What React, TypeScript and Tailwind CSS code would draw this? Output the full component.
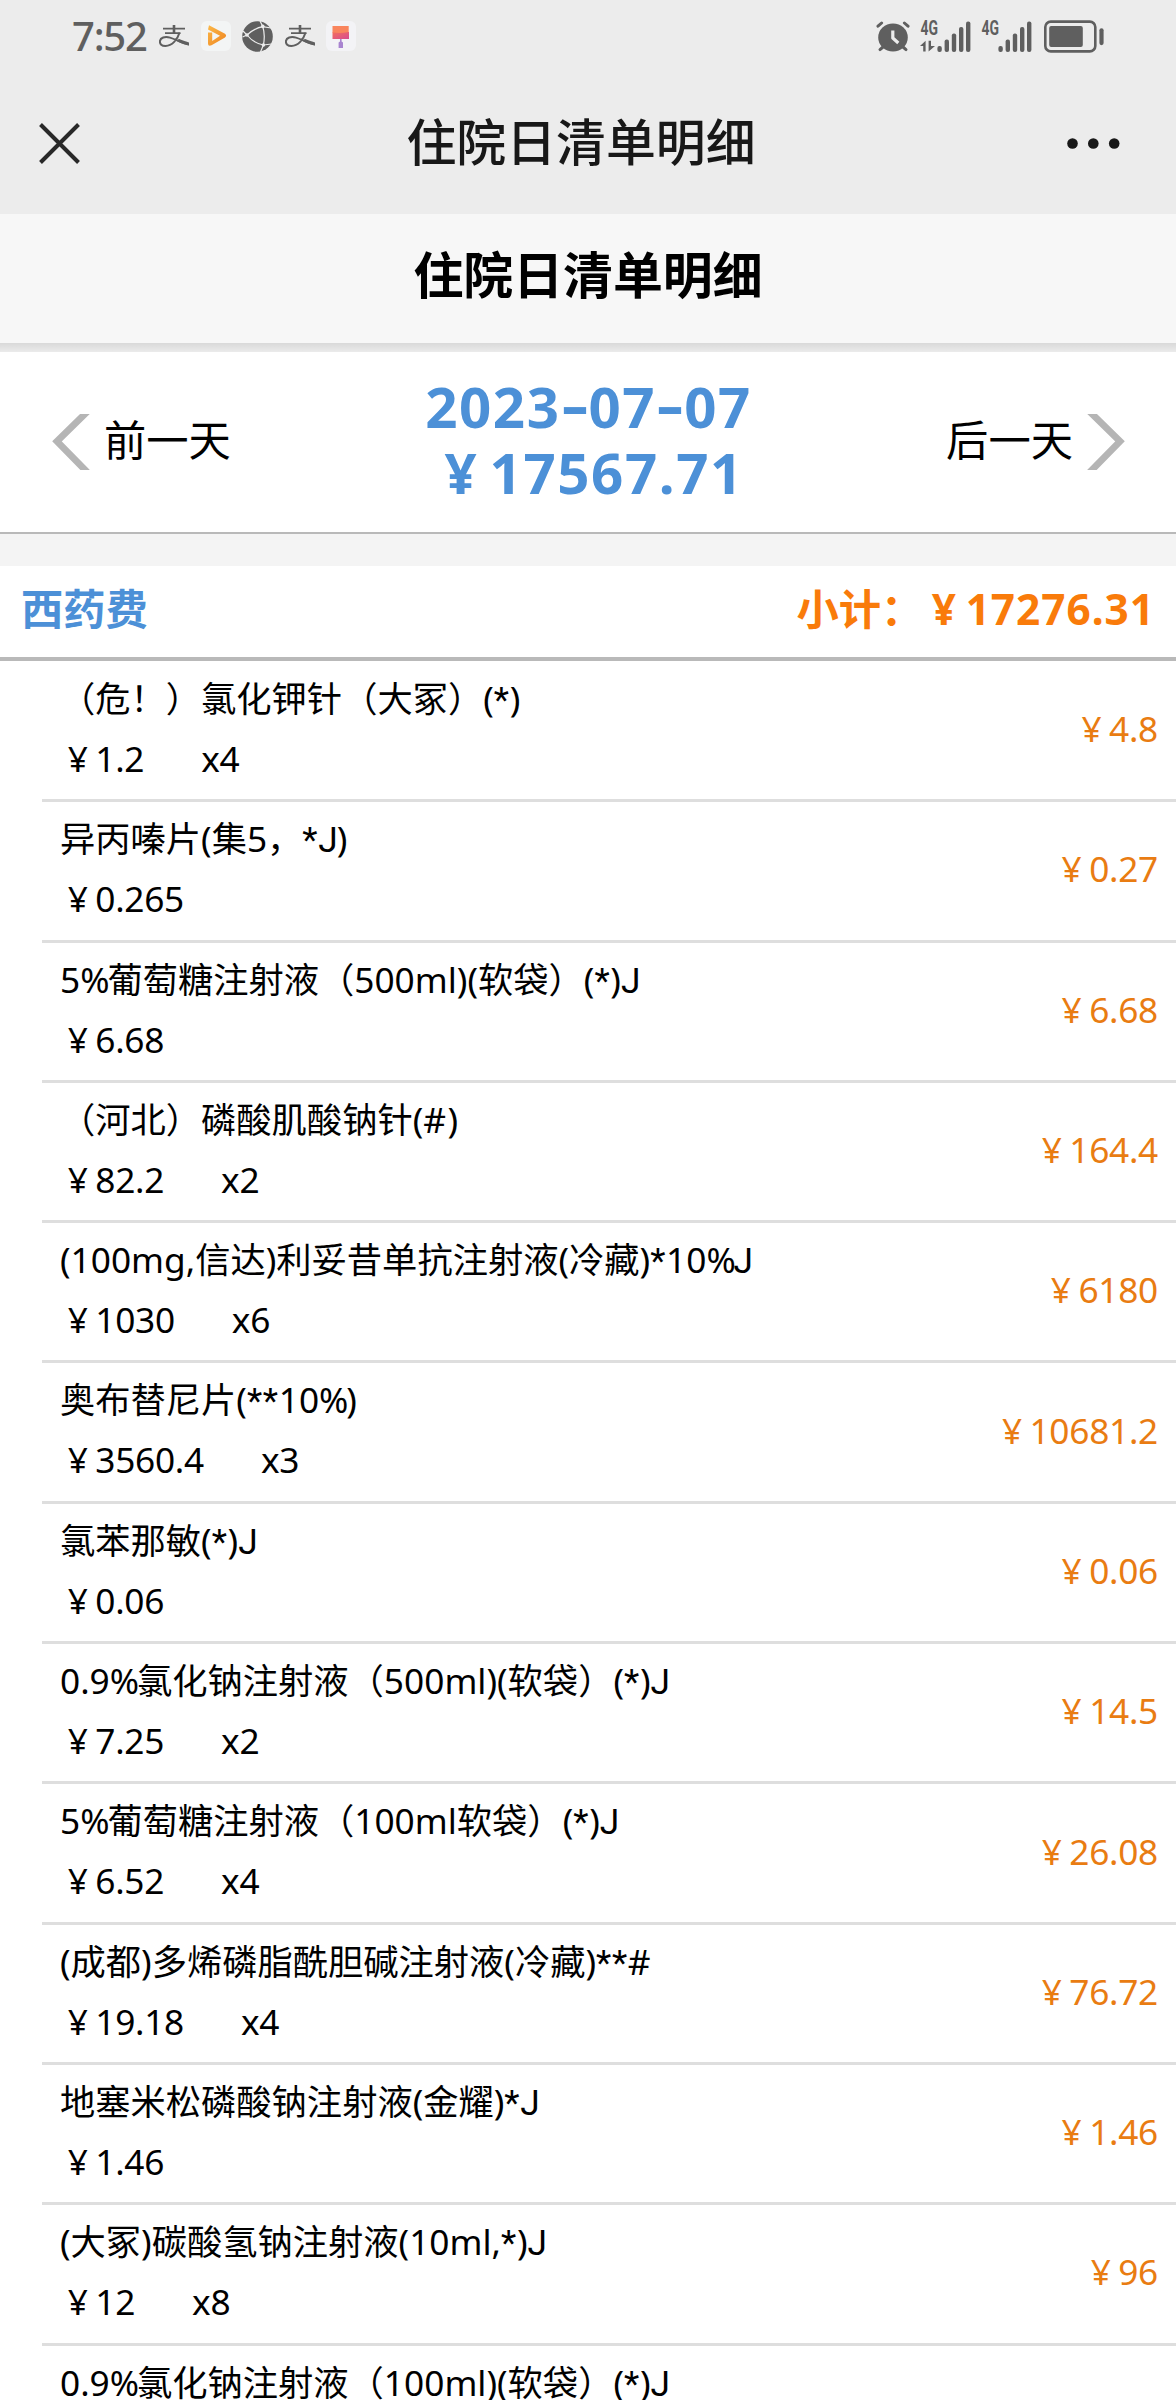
import type { ReactNode } from 'react';

type Item = {
    name: string;
    price: string;
    count?: string;
    total: string;
};

const items: Item[] = [
    { name: '（危！）氯化钾针（大冢）(*)', price: '1.2', count: 'x4', total: '4.8' },
    { name: '异丙嗪片(集5，*J)', price: '0.265', total: '0.27' },
    { name: '5%葡萄糖注射液（500ml)(软袋）(*)J', price: '6.68', total: '6.68' },
    { name: '（河北）磷酸肌酸钠针(#)', price: '82.2', count: 'x2', total: '164.4' },
    { name: '(100mg,信达)利妥昔单抗注射液(冷藏)*10%J', price: '1030', count: 'x6', total: '6180' },
    { name: '奥布替尼片(**10%)', price: '3560.4', count: 'x3', total: '10681.2' },
    { name: '氯苯那敏(*)J', price: '0.06', total: '0.06' },
    { name: '0.9%氯化钠注射液（500ml)(软袋）(*)J', price: '7.25', count: 'x2', total: '14.5' },
    { name: '5%葡萄糖注射液（100ml软袋）(*)J', price: '6.52', count: 'x4', total: '26.08' },
    { name: '(成都)多烯磷脂酰胆碱注射液(冷藏)**#', price: '19.18', count: 'x4', total: '76.72' },
    { name: '地塞米松磷酸钠注射液(金耀)*J', price: '1.46', total: '1.46' },
    { name: '(大冢)碳酸氢钠注射液(10ml,*)J', price: '12', count: 'x8', total: '96' },
    { name: '0.9%氯化钠注射液（100ml)(软袋）(*)J', price: '7.25', count: 'x2', total: '14.5' },
];

/** 个别字符的字体和字距 */
const charStyle: Record<string, string> = {
    J: 'font-[Roboto,sans-serif] leading-none tracking-[-0.03em]',
    '*': 'font-[Roboto,sans-serif] leading-none tracking-[0.02em]',
    '%': 'tracking-[-0.06em]',
    '#': 'tracking-[0.04em]',
};

/** 药品名称 */
function ItemName({ name }: { name: string }) {
    return (
        <p>
            {name.split(/([J*%#])/).map((part, i) =>
                charStyle[part] ? (
                    <span key={i} className={charStyle[part]}>
                        {part}
                    </span>
                ) : (
                    part
                ),
            )}
        </p>
    );
}

/** 金额：符号占一个全角宽度 */
function Money({ value }: { value: string }) {
    return (
        <>
            <span className="inline-block w-[1em] text-center">¥</span>
            {value}
        </>
    );
}

function AlipayIcon() {
    return (
        <svg width="30" height="30" viewBox="0 0 30 30" fill="none" stroke="#5f5f5f">
            <path d="M4 7.6H26M6 12.2H21.5" strokeWidth="1.8" />
            <path d="M15 4V12" strokeWidth="2.6" />
            <path
                d="M20.5 11.8C18.5 18.5 13 25 6.5 25C2.5 25 .8 23 .9 20.4C1.2 16.6 6 15.2 11 16.6C17 18.3 23 22.3 30 23.6"
                strokeWidth="2"
            />
            <path d="M19 19.2C23 21 26.5 22.4 30 22.9" strokeWidth="3" />
        </svg>
    );
}

function PlayIcon() {
    return (
        <svg width="30" height="30" viewBox="0 0 30 30">
            <defs>
                <linearGradient id="play" x1="0" y1="0" x2="1" y2="1">
                    <stop offset="0" stopColor="#fbb848" />
                    <stop offset="1" stopColor="#ee8420" />
                </linearGradient>
            </defs>
            <rect width="30" height="30" rx="6" fill="#f3f5f5" />
            <path
                d="M8 4.2L24 12.8Q26.2 14.6 24 16.4L10.5 24.3Q7 25.6 7 22.5V11.5H11.2V20L19 14.8L7 8.6Z"
                fill="url(#play)"
            />
        </svg>
    );
}

function GlobeIcon() {
    return (
        <svg width="31" height="31" viewBox="0 0 31 31">
            <circle cx="15.5" cy="15.5" r="15.3" fill="#5f5f5f" />
            <g fill="none" stroke="#ececec" strokeWidth="1.2">
                <path d="M0.5 16L5 14C10 9.5 15 6.5 20.8 5.6L29 7" />
                <path d="M18 0L20.8 5.6C22.5 11 22.6 18 21.4 24L18.5 31" />
                <path d="M1 10L5 14C9 19 14 22.6 21.4 24L29.5 23" />
            </g>
            <g fill="#ececec">
                <circle cx="20.8" cy="5.4" r="1.8" />
                <circle cx="5" cy="14" r="1.8" />
                <circle cx="21.4" cy="24" r="1.8" />
            </g>
        </svg>
    );
}

function BrushIcon() {
    return (
        <svg width="30" height="30" viewBox="0 0 30 30">
            <defs>
                <linearGradient id="brush" x1="0" y1="0" x2="1" y2="1">
                    <stop offset="0" stopColor="#f4705c" />
                    <stop offset="1" stopColor="#d64a92" />
                </linearGradient>
            </defs>
            <rect width="30" height="30" rx="6" fill="#f3f3f6" />
            <path d="M6.5 11H23V18H6.5Z" fill="url(#brush)" />
            <path d="M6.5 5H22.7V11Q15 12.5 6.5 11.5Z" fill="#f9855e" />
            <path d="M14 18H15.6V20.5L17 21.5V27H12.6V21.5L14 20.5Z" fill="#a884d0" />
        </svg>
    );
}

function AlarmIcon() {
    return (
        <svg width="34" height="31" viewBox="0 0 34 31" fill="none" stroke="#5f5f5f" strokeLinecap="round">
            <ellipse cx="17" cy="16.5" rx="14.8" ry="14" fill="#5f5f5f" stroke="none" />
            <path d="M2 5.2L5.6 2M32 5.2L28.4 2" strokeWidth="3" />
            <path d="M4 28.6L7 26M30 28.6L27 26" strokeWidth="3" />
            <path d="M16.8 9.5V17L22.3 22" stroke="#ececec" strokeWidth="3.2" strokeLinecap="butt" strokeLinejoin="round" />
        </svg>
    );
}

function SignalIcon({ data }: { data?: boolean }) {
    return (
        <svg width="51" height="31" viewBox="0 0 51 31" fill="#5f5f5f" className="overflow-visible">
            <text
                x="0.5"
                y="14.2"
                fontFamily="Roboto, sans-serif"
                fontWeight="700"
                fontSize="19.5"
                textLength="17.5"
                lengthAdjust="spacingAndGlyphs"
            >
                4G
            </text>
            {data && <path d="M0 25L5.6 19.8V30.5H3.2V25ZM8.6 19.8H11V25H15L8.6 30.5Z" />}
            <rect x="17.4" y="25" width="4.4" height="6" rx="2" />
            <rect x="24.6" y="18.6" width="4.4" height="12.4" rx="2" />
            <rect x="31.8" y="12.4" width="4.4" height="18.6" rx="2" />
            <rect x="39" y="6" width="4.4" height="25" rx="2" />
            <rect x="46" y="0.4" width="4.4" height="30.6" rx="2" />
        </svg>
    );
}

function BatteryIcon() {
    return (
        <svg width="60" height="33" viewBox="0 0 60 33" fill="#5f5f5f">
            <rect x="1.3" y="1.6" width="50" height="29.8" rx="5.5" fill="none" stroke="#5f5f5f" strokeWidth="2.6" />
            <rect x="5.2" y="6" width="33.6" height="21" rx="2" />
            <rect x="55.4" y="8.2" width="4.2" height="17" rx="2.1" />
        </svg>
    );
}

function Chevron({ right }: { right?: boolean }) {
    return (
        <svg width="38" height="56" viewBox="0 0 38 56" fill="none" stroke="#b5b5b5" strokeWidth="6.8">
            {right ? <path d="M-2 -7L33 27.4L-2 63" /> : <path d="M40 -7L5 27.4L40 63" />}
        </svg>
    );
}

function StatusBar() {
    return (
        <div className="flex h-[72px] items-center justify-between pr-[72px] pl-[72px] text-[#5f5f5f]">
            <div className="flex items-center">
                <span className="w-[87px] text-[40px] leading-[40px] font-medium tracking-[-1.2px]">7:52</span>
                <div className="flex items-center gap-[11.5px]">
                    <AlipayIcon />
                    <PlayIcon />
                    <GlobeIcon />
                    <AlipayIcon />
                    <BrushIcon />
                </div>
            </div>
            <div className="flex items-center">
                <AlarmIcon />
                <div className="ml-[10px] flex gap-[10px]">
                    <SignalIcon data />
                    <SignalIcon />
                </div>
                <div className="ml-3">
                    <BatteryIcon />
                </div>
            </div>
        </div>
    );
}

function Dash() {
    return <span className="inline-block w-[28px] -translate-y-[3px] scale-x-150 tracking-normal">-</span>;
}

function DayButton({ children }: { children: ReactNode }) {
    return <button className="flex items-center gap-[14px] text-[42.3px] leading-[60px]">{children}</button>;
}

export default function App() {
    return (
        <div className="h-[2400px] w-[1176px] overflow-hidden bg-white font-['Noto_Sans','Noto_Sans_CJK_SC',sans-serif] text-black">
            <header className="h-[214px] bg-[#ececec]">
                <StatusBar />
                <div className="flex h-[142px] items-center justify-between pr-[56px] pl-[39px] text-[#181818]">
                    <svg width="41" height="41" viewBox="0 0 41 41" fill="none" stroke="#282828" strokeWidth="4">
                        <path d="M1.5 1.5L39.5 39.5M39.5 1.5L1.5 39.5" />
                    </svg>
                    <h1 className="ml-[15px] pb-[2px] text-[49.9px] leading-[70px] font-medium">住院日清单明细</h1>
                    <svg width="53" height="11" viewBox="0 0 53 11" fill="#181818">
                        <circle cx="5.5" cy="5.5" r="5.3" />
                        <circle cx="26.3" cy="5.5" r="5.3" />
                        <circle cx="47.2" cy="5.5" r="5.3" />
                    </svg>
                </div>
            </header>

            <h2 className="h-[129px] bg-[#f7f7f7] pt-[24px] text-center text-[49.9px] leading-[74px] font-bold">
                住院日清单明细
            </h2>
            <div className="h-[9px] bg-linear-to-b from-[#d9d9d9] to-[#ebebeb]" />

            <div className="flex h-[182px] items-center justify-between border-b-2 border-[#b9b9b9] pr-[51px] pl-[52px]">
                <DayButton>
                    <Chevron />
                    <span className="-mt-[5px]">前一天</span>
                </DayButton>
                <div className="pb-[4px] text-center text-[56.4px] leading-[66px] font-bold tracking-[0.028em] text-[#4c90d7]">
                    <p>
                        2023
                        <Dash />
                        07
                        <Dash />
                        07
                    </p>
                    <p>
                        <Money value="17567.71" />
                    </p>
                </div>
                <DayButton>
                    <span className="-mt-[5px]">后一天</span>
                    <Chevron right />
                </DayButton>
            </div>

            <div className="h-8 bg-[#f4f4f4]" />

            <div className="flex h-[95px] items-center justify-between border-b-4 border-[#b9b9b9] pr-[21px] pb-[6px] pl-[21px] text-[42.3px] leading-[60px] font-bold">
                <span className="text-[#4c90d7]">西药费</span>
                <span className="tracking-[0.024em] text-[#f97b0a]">
                    <span className="tracking-normal">小计：</span>
                    <Money value="17276.31" />
                </span>
            </div>

            <ul className="pt-[1px] pl-[42px] text-[35.28px] leading-[60px]">
                {items.map((item, i) => (
                    <li
                        key={i}
                        className="flex h-[140.3px] items-center justify-between border-b-3 border-[#dedede] pr-[18px] pl-[18px]"
                    >
                        <div className="h-full pt-[6px] whitespace-nowrap">
                            <ItemName name={item.name} />
                            <p className="tracking-[-0.008em]">
                                <Money value={item.price} />
                                {item.count && <span className="ml-[57px]">{item.count}</span>}
                            </p>
                        </div>
                        <p className="pb-[5px] tracking-[-0.008em] text-[#e97c12]">
                            <Money value={item.total} />
                        </p>
                    </li>
                ))}
            </ul>
        </div>
    );
}
